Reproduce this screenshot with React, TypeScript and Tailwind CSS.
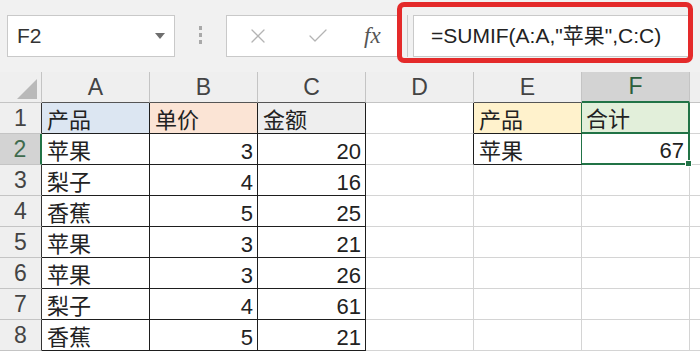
import { Check, X } from "lucide-react";

const rows: [string, number | string, number | string][] = [
  ["产品", "单价", "金额"],
  ["苹果", 3, 20],
  ["梨子", 4, 16],
  ["香蕉", 5, 25],
  ["苹果", 3, 21],
  ["苹果", 3, 26],
  ["梨子", 4, 61],
  ["香蕉", 5, 21],
];

const headBg = ["bg-[#dce6f2]", "bg-[#fbe4d5]", "bg-[#eeeeee]"];

const Toolbar = () => {
  return (
    <div className="flex h-[72px] items-start bg-[#f1f1f1]">
      <div className="ml-[7px] mt-[15px] flex h-[42px] w-[168px] items-center justify-between border border-[#c9c9c9] bg-white pl-[9px] pr-[9px]">
        <span className="text-[21px] text-[#333]">F2</span>
        <svg width="10" height="6" viewBox="0 0 10 6">
          <path d="M0 0h10L5 6z" fill="#6e6e6e" />
        </svg>
      </div>
      <div className="ml-[24px] mt-[26px] flex flex-col gap-[3px]">
        <span className="block h-[4px] w-[3px] bg-[#a9a9a9]" />
        <span className="block h-[4px] w-[3px] bg-[#a9a9a9]" />
        <span className="block h-[4px] w-[3px] bg-[#a9a9a9]" />
      </div>
      <div className="ml-[24px] mt-[15px] flex h-[42px] w-[183px] items-center border border-[#c9c9c9] bg-white pl-[19px]">
        <X size={24} strokeWidth={1.3} className="text-[#b4b4b4]" />
        <Check size={24} strokeWidth={1.3} className="ml-[36px] text-[#b4b4b4]" />
        <span className="ml-[34px] font-['Liberation_Serif',serif] text-[23px] italic text-[#555]">
          fx
        </span>
      </div>
      <div className="-ml-[12px] mt-[2px] flex h-[61px] w-[296px] items-start rounded-[7px] border-[5px] border-[#e42a2a] bg-[#f1f1f1]">
        <span className="ml-[5px] mt-[8px] block h-[42px] w-px bg-[#c9c9c9]" />
        <div className="ml-[5px] mt-[8px] flex h-[42px] flex-1 items-center border-y border-l border-[#c9c9c9] bg-white pl-[17px] text-[21px] text-[#222]">
          =SUMIF(A:A,"苹果",C:C)
        </div>
      </div>
    </div>
  );
};

const Sheet = () => {
  return (
    <div className="grid grid-cols-[42px_repeat(6,108px)_1fr] grid-rows-[31px_repeat(8,31px)_1fr] text-[22px] leading-none text-[#222]">
      {/* column header row */}
      <div className="flex items-end justify-end border-b border-r border-[#c4c4c4] bg-[#efefef] pb-[3px] pr-[4px]">
        <svg width="20" height="20" viewBox="0 0 20 20">
          <path d="M20 0V20H0z" fill="#b9b9b9" />
        </svg>
      </div>
      {["A", "B", "C"].map((l) => (
        <div
          key={l}
          className="flex items-center justify-center border-b border-r border-[#c4c4c4] border-b-[#555] bg-[#efefef] text-[23px] text-[#444]"
        >
          {l}
        </div>
      ))}
      <div className="flex items-center justify-center border-b border-r border-[#c4c4c4] bg-[#efefef] text-[23px] text-[#444]">
        D
      </div>
      <div className="flex items-center justify-center border-b border-r border-[#c4c4c4] border-b-[#555] bg-[#efefef] text-[23px] text-[#444]">
        E
      </div>
      <div className="flex items-center justify-center border-b-2 border-r border-[#c4c4c4] border-b-[#217346] bg-[#d3d3d3] text-[23px] text-[#2b5e3c]">
        F
      </div>
      <div className="border-b border-[#c4c4c4] bg-[#efefef]" />

      {rows.map((row, i) => {
        const r = i + 1;
        return [
          <div
            key={`h${r}`}
            className={
              r === 2
                ? "flex items-center justify-center border-b border-r-2 border-[#c4c4c4] border-r-[#217346] bg-[#d3d3d3] text-[23px] text-[#3f6b4d]"
                : "flex items-center justify-center border-b border-r border-[#c4c4c4] border-r-[#333] bg-[#efefef] text-[23px] text-[#444]"
            }
          >
            {r}
          </div>,
          ...row.map((v, c) => (
            <div
              key={`c${r}${c}`}
              className={`flex items-end border-b border-r border-[#1e1e1e] pb-[1px] ${
                c === 0 ? "pl-[5px]" : r === 1 ? "pl-[5px]" : "justify-end pr-[4px]"
              } ${r === 1 ? headBg[c] : "bg-white"}`}
            >
              {v}
            </div>
          )),
          <div
            key={`d${r}`}
            className={`border-b border-r border-[#d4d4d4] bg-white ${r <= 2 ? "border-r-[#1e1e1e]" : ""}`}
          />,
          r === 1 ? (
            <div key={`e${r}`} className="flex items-end border-b border-r border-[#1e1e1e] border-r-[#217346] bg-[#fff2cc] pb-[1px] pl-[5px]">
              产品
            </div>
          ) : r === 2 ? (
            <div key={`e${r}`} className="flex items-end border-b border-r border-[#1e1e1e] border-r-[#217346] bg-white pb-[1px] pl-[5px]">
              苹果
            </div>
          ) : (
            <div key={`e${r}`} className="border-b border-r border-[#d4d4d4] bg-white" />
          ),
          r === 1 ? (
            <div key={`f${r}`} className="flex items-end border-b-2 border-r-2 border-[#217346] bg-[#e2efda] pb-[1px] pl-[4px]">
              合计
            </div>
          ) : r === 2 ? (
            <div key={`f${r}`} className="relative flex items-end justify-end border-b-2 border-r-2 border-[#217346] bg-white pb-[1px] pr-[4px]">
              67
              <span className="absolute -bottom-[4px] -right-[4px] block h-[7px] w-[7px] border border-white bg-[#217346]" />
            </div>
          ) : (
            <div key={`f${r}`} className="border-b border-r border-[#d4d4d4] bg-white" />
          ),
          <div key={`g${r}`} className="border-b border-[#d4d4d4] bg-white" />,
        ];
      })}

      {/* partial row 9 */}
      <div className="border-r border-[#c4c4c4] bg-[#efefef]" />
      <div className="border-r border-[#d4d4d4] bg-white" />
      <div className="border-r border-[#d4d4d4] bg-white" />
      <div className="border-r border-[#1e1e1e] bg-white" />
      <div className="border-r border-[#d4d4d4] bg-white" />
      <div className="border-r border-[#d4d4d4] bg-white" />
      <div className="border-r border-[#d4d4d4] bg-white" />
      <div className="bg-white" />
    </div>
  );
};

export default function App() {
  return (
    <div className="h-[358px] w-[700px] overflow-hidden bg-white font-['Liberation_Sans','Noto_Sans_CJK_SC',sans-serif]">
      <Toolbar />
      <Sheet />
    </div>
  );
}
